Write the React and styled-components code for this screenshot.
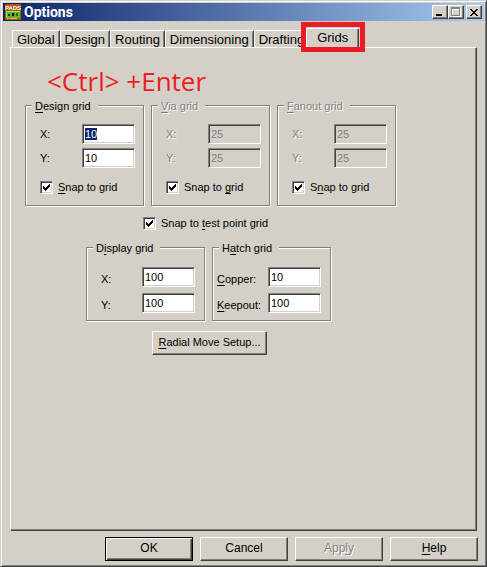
import React, { useEffect, useRef } from "react";
import styled, { createGlobalStyle, css } from "styled-components";

const GlobalStyle = createGlobalStyle`
  * {
    box-sizing: border-box;
  }
  body {
    margin: 0;
    background: #d4d0c8;
    color: #000;
    font-family: "Liberation Sans", Arial, sans-serif;
    font-size: 11px;
    line-height: 14px;
  }
  button, input {
    font: inherit;
    color: inherit;
    border-radius: 0;
  }
  u {
    text-underline-offset: 2px;
    text-decoration-skip-ink: none;
  }
`;

const raised = css`
  border: 1px solid;
  border-color: #fff #404040 #404040 #fff;
  box-shadow: inset -1px -1px 0 #808080;
`;

const disabledText = css`
  color: #808080;
  text-shadow: 1px 1px 0 #fff;
`;

const Dialog = styled.main`
  display: flex;
  flex-direction: column;
  min-height: 100vh;
  padding: 1px 1px 5px 1px;
  border: 1px solid;
  border-color: #d4d0c8 #404040 #404040 #d4d0c8;
  box-shadow: inset 1px 1px 0 #fff, inset -1px -1px 0 #808080;
`;

const TitleBar = styled.header`
  display: flex;
  align-items: center;
  height: 18px;
  margin: 1px;
  padding: 0 2px;
  background: linear-gradient(to right, #0a246a, #a6caf0);
`;

const Title = styled.h1`
  flex: 1;
  margin: 0 0 0 3px;
  color: #fff;
  font-family: Roboto, "Liberation Sans", sans-serif;
  font-size: 14px;
  line-height: 16px;
  font-weight: 700;
`;

const CaptionButton = styled.button`
  ${raised}
  display: flex;
  align-items: center;
  justify-content: center;
  width: 16px;
  height: 14px;
  padding: 0;
  margin-left: ${(props) => (props.$apart ? "2px" : "0")};
  background: #d4d0c8;
`;

const Body = styled.div`
  display: flex;
  flex-direction: column;
  flex: 1;
  padding: 6px 7px 0 8px;
`;

const TabList = styled.nav`
  display: flex;
  align-items: flex-end;
  height: 19px;
  padding-left: 2px;
`;

const Tab = styled.button`
  height: ${(props) => (props.$active ? "20px" : "17px")};
  padding: 0 4px;
  border: 1px solid;
  border-color: #fff #404040 transparent #fff;
  border-bottom: 0;
  border-radius: 2px 2px 0 0;
  box-shadow: inset -1px 0 0 #808080;
  background: #d4d0c8;
  font-size: 13px;
  line-height: 15px;
  white-space: nowrap;
  ${(props) =>
    props.$active &&
    css`
      padding: 0 10px 2px;
      margin-bottom: -1px;
    `}
`;

const Marked = styled.div`
  position: relative;
  display: flex;
  margin-left: -3px;
  z-index: 1;

  &::after {
    content: "";
    position: absolute;
    inset: -6px -6px -5px -5px;
    border: 5px solid #ed1c24;
    pointer-events: none;
  }
`;

const Panel = styled.section`
  ${raised}
  flex: 1;
  margin-right: 1px;
  padding: 16px 14px;
`;

const Shortcut = styled.p`
  margin: 0 0 0 22px;
  color: #ed1c24;
  font-family: "Open Sans", "Noto Sans", sans-serif;
  font-size: 26px;
  line-height: 34px;
`;

const GroupRow = styled.div`
  display: flex;
  gap: 7px;
  padding-left: ${(props) => (props.$indent ? "61px" : "0")};
`;

const Group = styled.fieldset`
  display: flex;
  flex-direction: column;
  gap: ${(props) => (props.$loose ? "6px" : "4px")};
  width: 119px;
  min-width: 0;
  margin: 0;
  padding: ${(props) => (props.$loose ? "13px 9px 7px 4px" : "12px 8px 11px 14px")};
  border: 1px solid #808080;
  box-shadow: inset 1px 1px 0 #fff, 1px 1px 0 #fff;
`;

const Legend = styled.legend`
  margin-left: ${(props) => (props.$loose ? "2px" : "-8px")};
  padding: 2px 7px 0 3px;
  background: #d4d0c8;
  line-height: 12px;
  ${(props) => props.$disabled && disabledText}
`;

const FieldRow = styled.label`
  display: flex;
  align-items: center;
  justify-content: space-between;
  padding-left: ${(props) => (props.$inset ? "10px" : "0")};
  ${(props) => props.$disabled && disabledText}
`;

const FieldName = styled.span`
  padding-top: ${(props) => (props.$loose ? "4px" : "0")};
`;

const TextBox = styled.input`
  width: 53px;
  height: 20px;
  padding: 0 2px 1px;
  border: 1px solid;
  border-color: #808080 #fff #fff #808080;
  box-shadow: inset 1px 1px 0 #404040, inset -1px -1px 0 #d4d0c8;
  background: #fff;
  outline: none;

  &:disabled {
    background: #d4d0c8;
    color: #808080;
  }
  &::selection {
    background: #0a246a;
    color: #fff;
  }
`;

const CheckLabel = styled.label`
  display: flex;
  align-items: center;
  gap: 5px;
  margin-top: ${(props) => (props.$centered ? "0" : "8px")};
  padding: ${(props) => (props.$centered ? "10px 0 10px 118px" : "0")};
  white-space: nowrap;
`;

const CheckFrame = styled.span`
  position: relative;
  display: flex;

  svg {
    position: absolute;
    top: 3px;
    left: 3px;
    pointer-events: none;
  }
  input:not(:checked) + svg {
    display: none;
  }
`;

const CheckInput = styled.input`
  appearance: none;
  width: 13px;
  height: 13px;
  margin: 0;
  border: 1px solid;
  border-color: #808080 #fff #fff #808080;
  box-shadow: inset 1px 1px 0 #404040, inset -1px -1px 0 #d4d0c8;
  background: #fff;
`;

const PushButton = styled.button`
  ${raised}
  width: ${(props) => (props.$wide ? "115px" : "88px")};
  height: 24px;
  padding: 0 0 2px;
  background: #d4d0c8;
  font-size: ${(props) => (props.$wide ? "11px" : "12px")};
  white-space: nowrap;

  &:disabled {
    ${disabledText}
  }
  ${(props) =>
    props.$default &&
    css`
      border-color: #000;
      box-shadow: inset 1px 1px 0 #fff, inset -1px -1px 0 #404040,
        inset -2px -2px 0 #808080;
    `}
`;

const RadialRow = styled.div`
  padding: 10px 0 0 127px;
`;

const Footer = styled.footer`
  display: flex;
  justify-content: flex-end;
  gap: 7px;
  padding-top: 6px;
`;

const IconText = styled.text`
  fill: #fff;
  font-family: "Liberation Sans", Arial, sans-serif;
  font-size: 6px;
  font-weight: 700;
`;

const PadsIcon = () => (
  <svg width="16" height="16" viewBox="0 0 16 16" shapeRendering="crispEdges" aria-hidden="true">
    <rect width="16" height="16" fill="#b8500c" />
    <IconText x="8" y="6" textAnchor="middle">
      PADS
    </IconText>
    <rect x="1" y="7" width="14" height="7" fill="#48c818" />
    <path d="M1 7h14v1H1zM1 7h1v7H1z" fill="#90f040" />
    <rect x="3" y="10" width="2" height="2" fill="#103808" />
    <rect x="6" y="9" width="4" height="4" fill="#808080" />
    <rect x="7" y="9" width="2" height="3" fill="#101010" />
    <rect x="11" y="9" width="2" height="3" fill="#187008" />
    <path d="M2 14h2v1H2zM5 14h7v1H5z" fill="#f0c020" />
  </svg>
);

const CheckMark = () => (
  <svg width="7" height="7" viewBox="0 0 7 7" shapeRendering="crispEdges" aria-hidden="true">
    <path d="M0 2h1v1h1v1h1V3h1V2h1V1h1V0h1v3H6v1H5v1H4v1H3v1H2V6H1V5H0z" />
  </svg>
);

function Check({ children, centered }) {
  return (
    <CheckLabel $centered={centered}>
      <CheckFrame>
        <CheckInput type="checkbox" defaultChecked />
        <CheckMark />
      </CheckFrame>
      <span>{children}</span>
    </CheckLabel>
  );
}

function Field({ label, value, disabled, inset, loose, inputRef }) {
  return (
    <FieldRow $disabled={disabled} $inset={inset}>
      <FieldName $loose={loose}>{label}</FieldName>
      <TextBox ref={inputRef} type="text" defaultValue={value} disabled={disabled} />
    </FieldRow>
  );
}

export default function App() {
  const firstField = useRef(null);

  useEffect(() => {
    firstField.current.focus();
    firstField.current.select();
  }, []);

  return (
    <>
      <GlobalStyle />
      <Dialog>
        <TitleBar>
          <PadsIcon />
          <Title>Options</Title>
          <CaptionButton type="button" aria-label="Minimize">
            <svg width="10" height="10" viewBox="0 0 10 10" shapeRendering="crispEdges">
              <rect x="1" y="7" width="6" height="2" />
            </svg>
          </CaptionButton>
          <CaptionButton type="button" aria-label="Maximize" disabled>
            <svg width="10" height="10" viewBox="0 0 10 10" shapeRendering="crispEdges">
              <path d="M1 1h9v9H1zM2 3v6h7V3z" fill="#fff" fillRule="evenodd" />
              <path d="M0 0h9v9H0zM1 2v6h7V2z" fill="#808080" fillRule="evenodd" />
            </svg>
          </CaptionButton>
          <CaptionButton type="button" aria-label="Close" $apart>
            <svg width="8" height="7" viewBox="0 0 8 7" shapeRendering="crispEdges">
              <path d="M0 0h2v1h1v1h2V1h1V0h2v1H7v1H6v1H5v1h1v1h1v1h1v1H6V6H5V5H3v1H2v1H0V6h1V5h1V4h1V3H2V2H1V1H0z" />
            </svg>
          </CaptionButton>
        </TitleBar>
        <Body>
          <TabList>
            <Tab type="button">Global</Tab>
            <Tab type="button">Design</Tab>
            <Tab type="button">Routing</Tab>
            <Tab type="button">Dimensioning</Tab>
            <Tab type="button">Drafting</Tab>
            <Marked>
              <Tab type="button" $active>
                Grids
              </Tab>
            </Marked>
          </TabList>
          <Panel>
            <Shortcut>&lt;Ctrl&gt; +Enter</Shortcut>
            <GroupRow>
              <Group>
                <Legend>
                  <u>D</u>esign grid
                </Legend>
                <Field label="X:" value="10" inputRef={firstField} />
                <Field label="Y:" value="10" />
                <Check>
                  <u>S</u>nap to grid
                </Check>
              </Group>
              <Group>
                <Legend $disabled>
                  <u>V</u>ia grid
                </Legend>
                <Field label="X:" value="25" disabled />
                <Field label="Y:" value="25" disabled />
                <Check>
                  Snap to <u>g</u>rid
                </Check>
              </Group>
              <Group>
                <Legend $disabled>
                  <u>F</u>anout grid
                </Legend>
                <Field label="X:" value="25" disabled />
                <Field label="Y:" value="25" disabled />
                <Check>
                  S<u>n</u>ap to grid
                </Check>
              </Group>
            </GroupRow>
            <Check centered>
              Snap to <u>t</u>est point grid
            </Check>
            <GroupRow $indent>
              <Group $loose>
                <Legend $loose>
                  D<u>i</u>splay grid
                </Legend>
                <Field label="X:" value="100" inset loose />
                <Field label="Y:" value="100" inset loose />
              </Group>
              <Group $loose>
                <Legend $loose>
                  H<u>a</u>tch grid
                </Legend>
                <Field label={<><u>C</u>opper:</>} value="10" loose />
                <Field label={<><u>K</u>eepout:</>} value="100" loose />
              </Group>
            </GroupRow>
            <RadialRow>
              <PushButton type="button" $wide>
                <u>R</u>adial Move Setup...
              </PushButton>
            </RadialRow>
          </Panel>
          <Footer>
            <PushButton type="button" $default>
              OK
            </PushButton>
            <PushButton type="button">Cancel</PushButton>
            <PushButton type="button" disabled>
              App<u>l</u>y
            </PushButton>
            <PushButton type="button">
              <u>H</u>elp
            </PushButton>
          </Footer>
        </Body>
      </Dialog>
    </>
  );
}
